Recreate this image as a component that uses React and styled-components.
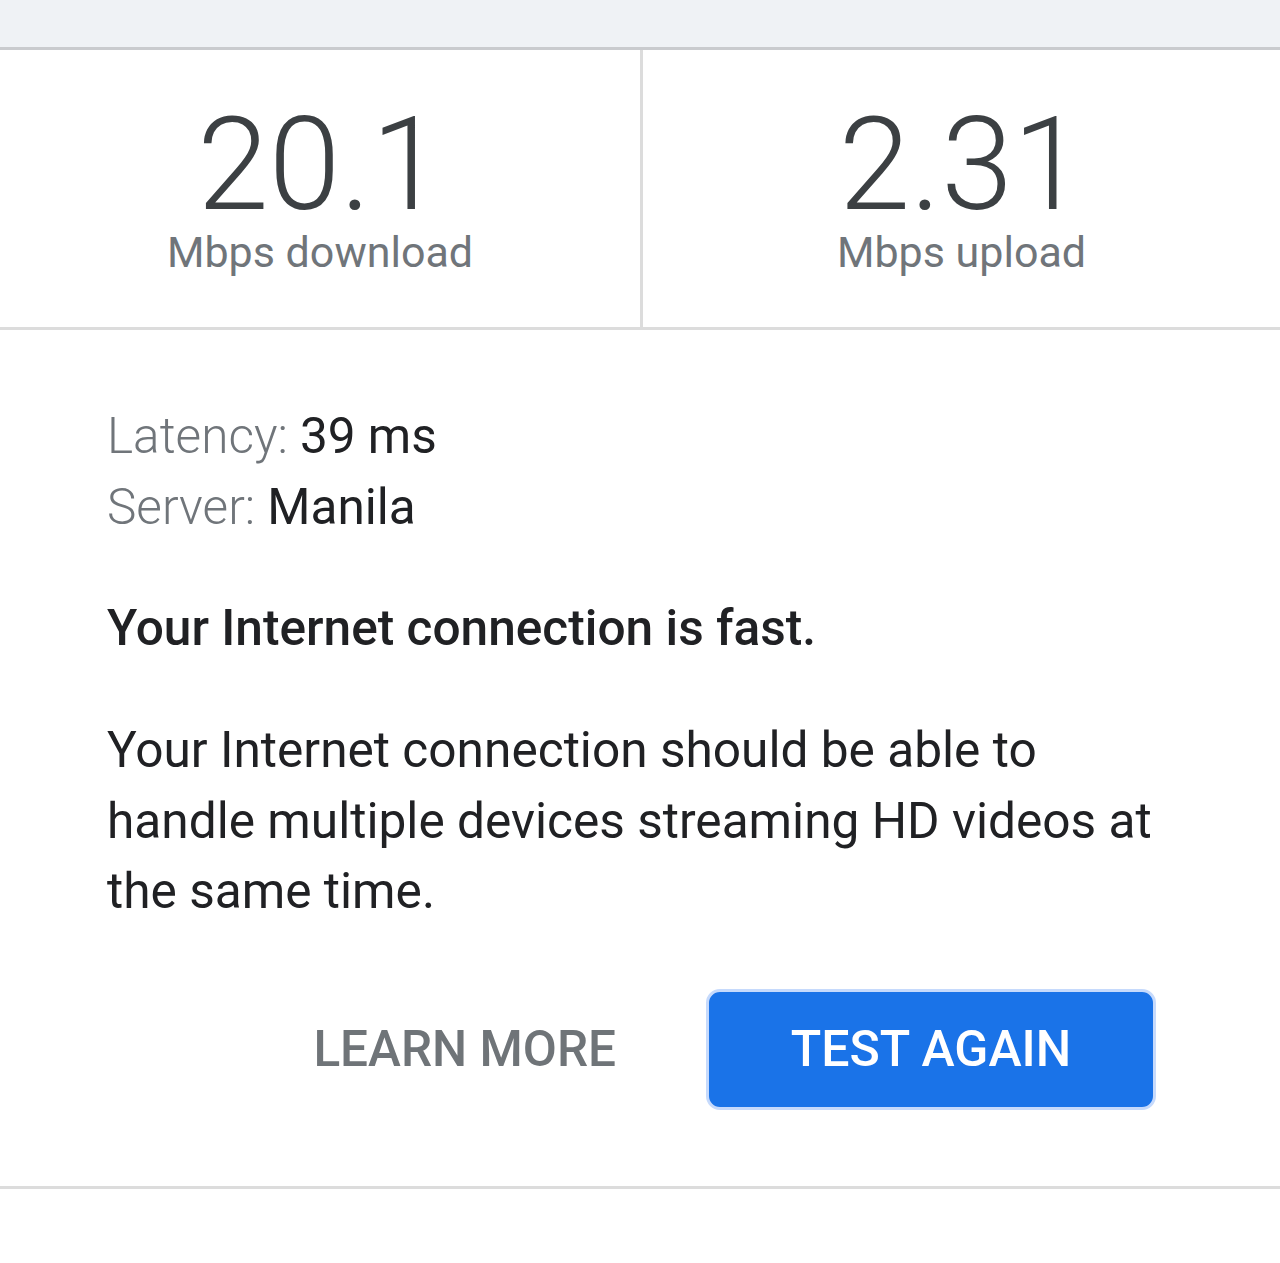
import React from 'react';
import styled, { createGlobalStyle } from 'styled-components';

const GlobalStyle = createGlobalStyle`
  *, *::before, *::after {
    box-sizing: border-box;
  }
  html, body {
    margin: 0;
    padding: 0;
    background: #ffffff;
    font-family: Roboto, "Noto Sans", Arial, sans-serif;
  }
`;

const Page = styled.div`
  width: 1280px;
  height: 1263px;
  background: #ffffff;
  overflow: hidden;
`;

const TopBand = styled.div`
  height: 50px;
  background: #eff2f5;
  border-bottom: 3px solid #c9cbce;
`;

const Stats = styled.div`
  display: grid;
  grid-template-columns: 1fr 1fr;
  height: 280px;
  border-bottom: 3px solid #dcdcdc;
`;

const Stat = styled.div`
  display: flex;
  flex-direction: column;
  align-items: center;
  padding-top: 54px;
  border-left: ${(p) => (p.divided ? '3px solid #dcdcdc' : 'none')};
`;

const Value = styled.div`
  font-size: 129px;
  font-weight: 300;
  line-height: 122px;
  color: #3c4043;
`;

const Unit = styled.div`
  font-size: 43px;
  line-height: 52px;
  color: #70757a;
`;

const Body = styled.div`
  padding: 71px 107px 0;
  height: 859px;
  border-bottom: 3px solid #dcdcdc;
  display: flex;
  flex-direction: column;
`;

const InfoLine = styled.div`
  font-size: 49.5px;
  line-height: 71px;
  color: #202124;
`;

const InfoLabel = styled.span`
  font-weight: 300;
  color: #70757a;
`;

const Headline = styled.div`
  margin-top: 50px;
  font-size: 49.6px;
  font-weight: 500;
  line-height: 70px;
  color: #202124;
`;

const Paragraph = styled.p`
  margin: 52px 0 0;
  font-size: 49.6px;
  line-height: 70.5px;
  color: #202124;
`;

const Actions = styled.div`
  display: flex;
  justify-content: flex-end;
  align-items: center;
  gap: 90px;
  margin-top: 62px;
  padding-right: 17px;
`;

const TextButton = styled.button`
  border: none;
  background: none;
  padding: 0;
  font-family: inherit;
  font-size: 49.5px;
  font-weight: 500;
  color: #6f7478;
`;

const FilledButton = styled.button`
  width: 450px;
  height: 121px;
  border-radius: 14px;
  border: 3px solid #c6dafc;
  background: #1a73e8;
  color: #ffffff;
  font-family: inherit;
  font-size: 50px;
  font-weight: 500;
`;

export default function App() {
  return (
    <Page>
      <GlobalStyle />
      <TopBand />
      <Stats>
        <Stat>
          <Value>20.1</Value>
          <Unit>Mbps download</Unit>
        </Stat>
        <Stat divided>
          <Value>2.31</Value>
          <Unit>Mbps upload</Unit>
        </Stat>
      </Stats>
      <Body>
        <InfoLine>
          <InfoLabel>Latency: </InfoLabel>39 ms
        </InfoLine>
        <InfoLine>
          <InfoLabel>Server: </InfoLabel>Manila
        </InfoLine>
        <Headline>Your Internet connection is fast.</Headline>
        <Paragraph>
          Your Internet connection should be able to handle multiple devices
          streaming HD videos at the same time.
        </Paragraph>
        <Actions>
          <TextButton>LEARN MORE</TextButton>
          <FilledButton>TEST AGAIN</FilledButton>
        </Actions>
      </Body>
    </Page>
  );
}
